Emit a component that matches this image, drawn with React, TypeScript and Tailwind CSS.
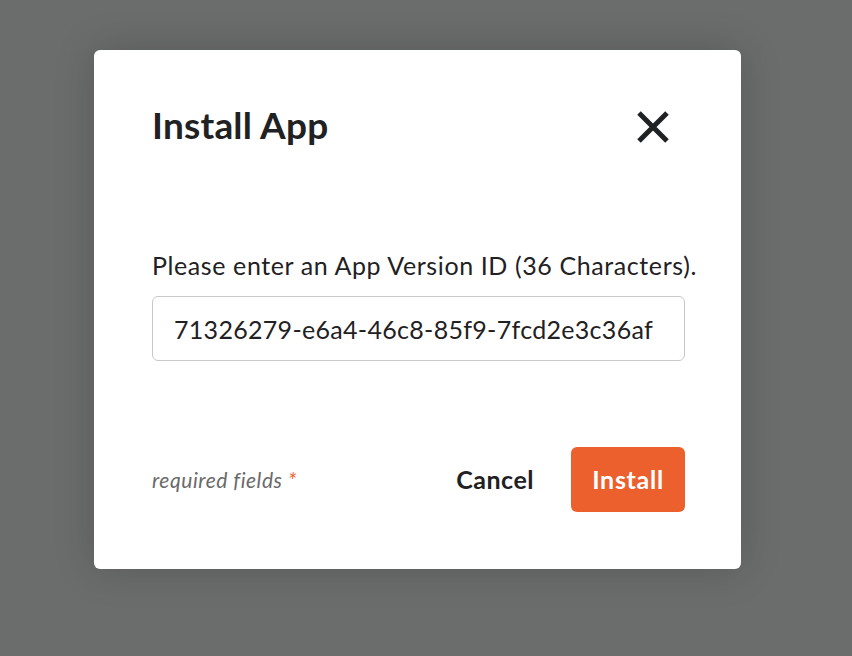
export default function App() {
  return (
    <div
      className="w-[852px] h-[656px] bg-[#6b6d6c] pt-[50px] pl-[94px]"
      style={{ fontFamily: 'Lato, "Open Sans", sans-serif' }}
    >
      <div className="w-[647px] bg-white rounded-[6px] shadow-[0_0_40px_rgba(0,0,0,0.18)] pl-[58px] pr-[56px] pt-[45px] pb-[57px] text-[#1f2123]">
        {/* Header */}
        <div className="h-16 flex items-center justify-between">
          <h1 className="text-[37px] font-bold leading-none tracking-[0.2px] pb-[5px]">Install App</h1>
          <button className="w-16 h-16 flex items-center justify-end pr-[15px]" aria-label="Close">
            <svg width="34" height="34" viewBox="0 0 34 34">
              <path d="M3 3 L31 31 M31 3 L3 31" stroke="#1f2123" strokeWidth="5" />
            </svg>
          </button>
        </div>

        {/* Body */}
        <p className="mt-[88px] text-[25px] leading-[36px] tracking-[0.6px] whitespace-nowrap">
          Please enter an App Version ID (36 Characters).
        </p>
        <input
          className="mt-[13px] w-full h-[65px] border border-[#c9c9c9] rounded-[6px] px-[21px] text-[25px] tracking-[0.3px] text-[#1f2123] outline-none"
          defaultValue="71326279-e6a4-46c8-85f9-7fcd2e3c36af"
        />

        {/* Footer */}
        <div className="mt-[86px] flex items-center justify-between">
          <span className="text-[21px] italic tracking-[0.55px] text-[#6a6a6a]">
            required fields <span className="text-[#ec602e]">*</span>
          </span>
          <div className="flex items-center gap-[37px]">
            <button className="text-[25px] font-bold tracking-[0.5px]">Cancel</button>
            <button className="w-[114px] h-[65px] bg-[#ec602e] rounded-[6px] text-white text-[25px] font-bold tracking-[0.7px]">
              Install
            </button>
          </div>
        </div>
      </div>
    </div>
  );
}
